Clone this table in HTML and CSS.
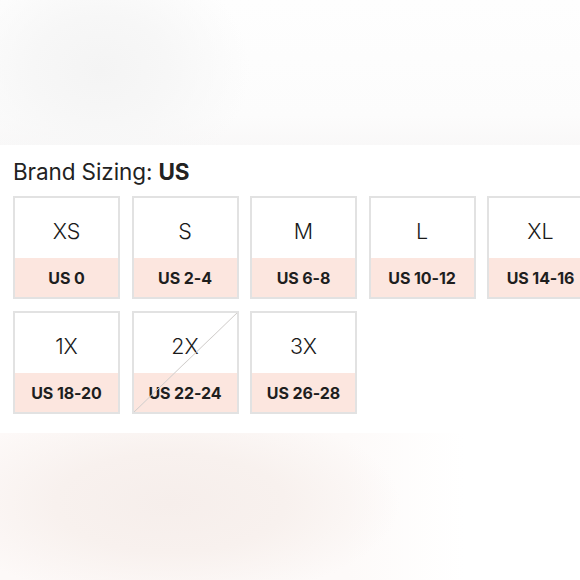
FILE: index.html
```html
<!DOCTYPE html>
<html>
<head>
<meta charset="utf-8">
<link rel="stylesheet" href="styles.css">
</head>
<body>
<div class="page">
  <div class="blur-top"></div>
  <section class="sizing">
    <h2 class="title">Brand Sizing: <b>US</b></h2>
    <div class="grid">
      <div class="card"><div class="size">XS</div><div class="us">US 0</div></div>
      <div class="card"><div class="size">S</div><div class="us">US 2-4</div></div>
      <div class="card"><div class="size">M</div><div class="us">US 6-8</div></div>
      <div class="card"><div class="size">L</div><div class="us">US 10-12</div></div>
      <div class="card"><div class="size">XL</div><div class="us">US 14-16</div></div>
      <div class="card"><div class="size">1X</div><div class="us">US 18-20</div></div>
      <div class="card crossed"><div class="size">2X</div><div class="us">US 22-24</div></div>
      <div class="card"><div class="size">3X</div><div class="us">US 26-28</div></div>
    </div>
  </section>
  <div class="blur-bottom"></div>
</div>
</body>
</html>
```
FILE: styles.css
```css
html, body {
  margin: 0;
  padding: 0;
  background: #fff;
}
.page {
  width: 580px;
  height: 580px;
  overflow: hidden;
  display: flex;
  flex-direction: column;
  font-family: "Inter", "Liberation Sans", sans-serif;
  color: #1f1f1f;
}
.blur-top {
  height: 145px;
  flex: none;
  background:
    radial-gradient(ellipse 150px 120px at 100px 70px, #f4f4f4 0%, #f7f7f7 45%, rgba(250,250,250,0) 100%),
    linear-gradient(to bottom, #fefefe 0%, #fcfcfc 80%, #f9f8f8 100%);
}
.sizing {
  flex: none;
  height: 288px;
  background: #fff;
  padding: 14px 0 0 13px;
  box-sizing: border-box;
  overflow: hidden;
}
.title {
  margin: 0 0 11px 0;
  font-size: 22.5px;
  font-weight: 400;
  line-height: 26px;
  letter-spacing: -0.1px;
  color: #222;
}
.title b {
  font-weight: 700;
}
.grid {
  display: grid;
  grid-template-columns: repeat(5, 107px);
  column-gap: 11.5px;
  row-gap: 12px;
  width: 700px;
}
.card {
  position: relative;
  height: 103px;
  border: 2px solid #e2e2e2;
  box-sizing: border-box;
  display: flex;
  flex-direction: column;
}
.size {
  height: 60px;
  display: flex;
  align-items: center;
  justify-content: center;
  font-size: 21.5px;
  font-weight: 300;
  color: #1a1a1a;
  padding-top: 5px;
  box-sizing: border-box;
}
.us {
  flex: 1;
  background: #fce6df;
  display: flex;
  align-items: center;
  justify-content: center;
  font-size: 16px;
  font-weight: 700;
  color: #1e1e1e;
  letter-spacing: -0.1px;
}
.crossed::after {
  content: "";
  position: absolute;
  inset: 0;
  background: linear-gradient(to bottom right, transparent calc(50% - 0.8px), #d2cfcd 50%, transparent calc(50% + 0.8px));
}
.blur-bottom {
  flex: 1;
  background:
    radial-gradient(ellipse 230px 100px at 170px 70px, #f6eeeb 0%, #f8f1ee 50%, rgba(253,249,248,0) 100%),
    linear-gradient(to right, #fdf9f8 0%, #fdfaf9 60%, #fff 80%);
}
```
